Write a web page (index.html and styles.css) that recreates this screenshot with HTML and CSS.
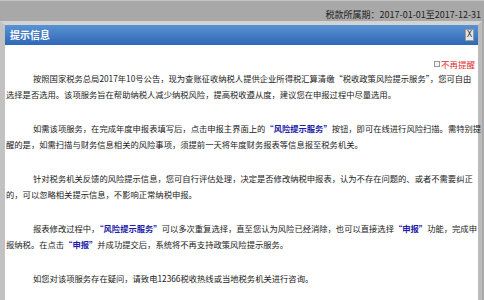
FILE: index.html
```html
<!DOCTYPE html>
<html lang="zh-CN">
<head>
<meta charset="utf-8">
<link rel="stylesheet" href="styles.css">
</head>
<body>
<div class="page">
  <div class="topbar"><span class="period">税款所属期：2017-01-01至2017-12-31</span></div>
  <div class="dialog">
    <div class="dlg-head">
      <span class="title">提示信息</span>
      <span class="close">X</span>
    </div>
    <div class="dlg-body">
      <div class="remind"><span class="chk"></span><span class="remind-text">不再提醒</span></div>
      <p>按照国家税务总局2017年10号公告，现为查账征收纳税人提供企业所得税汇算清缴“税收政策风险提示服务”，您可自由<br>选择是否选用。该项服务旨在帮助纳税人减少纳税风险，提高税收遵从度，建议您在申报过程中尽量选用。</p>
      <p>如需该项服务，在完成年度申报表填写后，点击申报主界面上的<b class="hl">“风险提示服务”</b>按钮，即可在线进行风险扫描。需特别提<br>醒的是，如需扫描与财务信息相关的风险事项，须提前一天将年度财务报表等信息报至税务机关。</p>
      <p>针对税务机关反馈的风险提示信息，您可自行评估处理，决定是否修改纳税申报表，认为不存在问题的、或者不需要纠正<br>的，可以忽略相关提示信息，不影响正常纳税申报。</p>
      <p>报表修改过程中，<b class="hl">“风险提示服务”</b>可以多次重复选择，直至您认为风险已经消除，也可以直接选择<b class="hl">“申报”</b>功能，完成申<br>报纳税。在点击<b class="hl">“申报”</b>并成功提交后，系统将不再支持政策风险提示服务。</p>
      <p>如您对该项服务存在疑问，请致电12366税收热线或当地税务机关进行咨询。</p>
    </div>
  </div>
</div>
</body>
</html>
```

FILE: styles.css
```css
* { box-sizing: border-box; }
html, body { margin: 0; padding: 0; background: #ffffff; }
body {
  font-family: "Noto Sans CJK SC", "Microsoft YaHei", sans-serif;
  color: #1a1a1a;
}
.page {
  width: 484px;
  height: 300px;
  display: flex;
  flex-direction: column;
  background: #a9a9a9;
}
.topbar {
  height: 32px;
  display: flex;
  justify-content: flex-end;
  align-items: flex-start;
  padding: 8px 3px 0 0;
  border-top: 1px solid #c4c4c4;
  background: #a8a8a8;
}
.period {
  font-size: 9px;
  line-height: 12px;
  color: #222;
}
.dialog {
  flex: 1;
  display: flex;
  flex-direction: column;
  margin-right: 2px;
  border-top: 4px solid #d3d3d3;
  border-left: 5px solid #c2c2c2;
  border-right: 4px solid #bcbcbc;
  border-bottom: 3px solid #ffffff;
  background: #fff;
}
.dlg-head {
  height: 20px;
  display: flex;
  align-items: center;
  justify-content: space-between;
  padding: 0 4px 0 5px;
  background: linear-gradient(#5a93d3, #2e67b5);
}
.title {
  color: #fff;
  font-size: 10px;
  font-weight: bold;
  line-height: 12px;
}
.close {
  width: 9px;
  height: 12px;
  background: #e6e6e6;
  border: 1px solid #9a9a9a;
  color: #333;
  font-family: "DejaVu Sans", sans-serif;
  font-size: 8px;
  line-height: 10px;
  text-align: center;
}
.dlg-body {
  flex: 1;
  padding: 13px 3px 0 1px;
  font-size: 8.3px;
  line-height: 16px;
}
.remind {
  display: flex;
  justify-content: flex-end;
  align-items: center;
  height: 12px;
  gap: 1px;
  margin-bottom: -4px;
}
.chk {
  width: 6px;
  height: 6px;
  border: 1px solid #9a9a9a;
  background: #f2f2f2;
}
.remind-text {
  color: #e03030;
  font-size: 8.5px;
}
.dlg-body p {
  margin: 4px 0 18px;
  text-indent: 27px;
  white-space: nowrap;
}
.hl {
  color: #1c1ca8;
  font-weight: bold;
}
```
